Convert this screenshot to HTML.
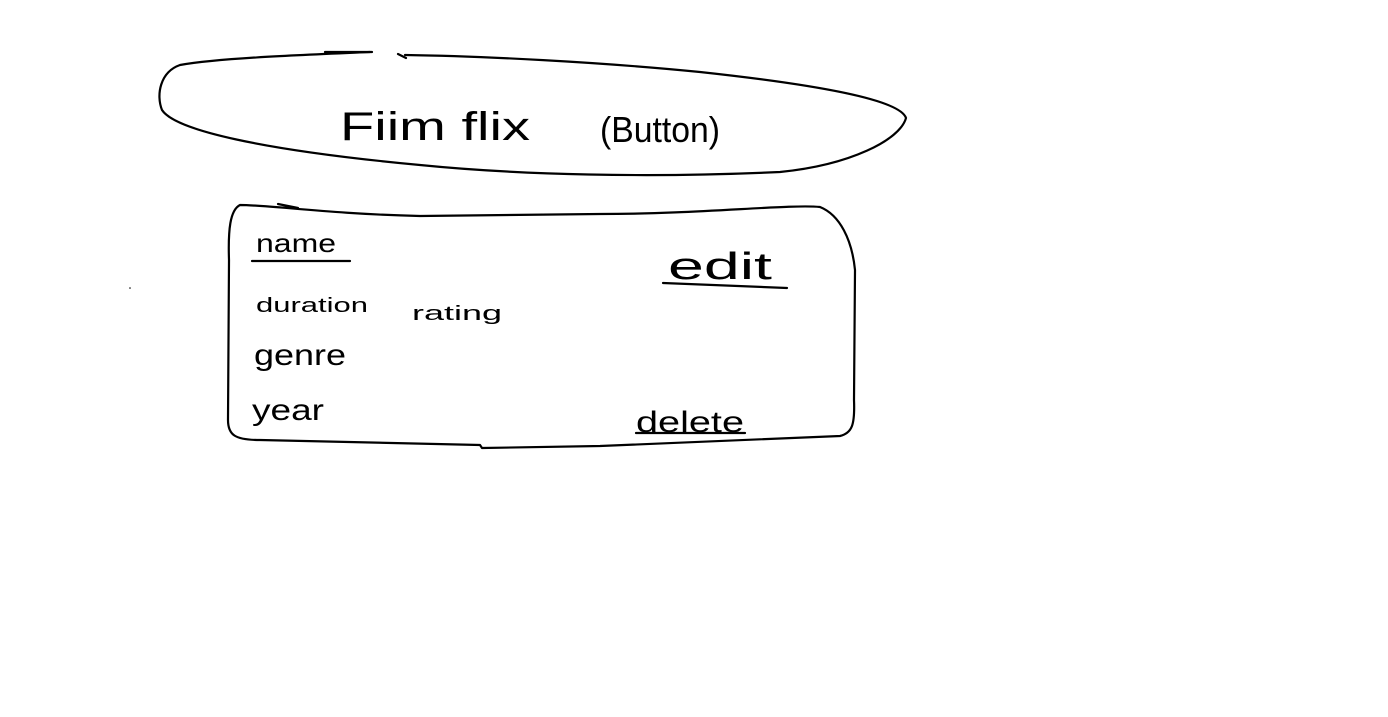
<!DOCTYPE html>
<html><head><meta charset="utf-8"><style>
html,body{margin:0;padding:0;background:#fff;width:1388px;height:717px;overflow:hidden}
svg{display:block}
text{font-family:"Liberation Sans",sans-serif;fill:#000}
</style></head><body>
<svg width="1388" height="717" viewBox="0 0 1388 717">
<g fill="none" stroke="#000" stroke-width="2.2" stroke-linecap="round" stroke-linejoin="round">
<path d="M370 52 C300 55 220 58 180 65 C160 72 156 95 162 110 C175 130 260 150 420 165 C520 175 650 178 780 172 C850 165 900 140 906 118 C900 100 820 85 700 72 C600 62 480 56 405 55"/>
<path d="M325 52 L372 52 M398 54 L406 58"/>
<path d="M278 204 L298 208 M240 205 C230 210 228 230 229 260 L228 420 C228 435 235 440 260 440 L480 445 L482 448 L600 446 L840 436 C852 433 855 425 854 400 L855 270 C852 240 840 215 820 207 C790 204 700 214 600 214 L420 216 C330 214 270 205 240 205 Z"/>
<path d="M252 261 L350 261"/>
<path d="M663 283 L787 288"/>
<path d="M636 433 L745 433"/>
</g>
<text x="340" y="140" font-size="40" font-weight="300" textLength="190" lengthAdjust="spacingAndGlyphs">Fiim flix</text>
<text x="600" y="142" font-size="36" font-weight="300" textLength="120" lengthAdjust="spacingAndGlyphs">(Button)</text>
<text x="256" y="252" font-size="26" textLength="80" lengthAdjust="spacingAndGlyphs">name</text>
<text x="668" y="279" font-size="38" textLength="104" lengthAdjust="spacingAndGlyphs">edit</text>
<text x="256" y="312" font-size="20" textLength="112" lengthAdjust="spacingAndGlyphs">duration</text>
<text x="412" y="320" font-size="20" textLength="90" lengthAdjust="spacingAndGlyphs">rating</text>
<text x="254" y="365" font-size="30" textLength="92" lengthAdjust="spacingAndGlyphs">genre</text>
<text x="252" y="420" font-size="30" textLength="72" lengthAdjust="spacingAndGlyphs">year</text>
<text x="636" y="432" font-size="30" textLength="108" lengthAdjust="spacingAndGlyphs">delete</text>
<circle cx="130" cy="288" r="0.8" fill="#000"/>
</svg>
</body></html>
